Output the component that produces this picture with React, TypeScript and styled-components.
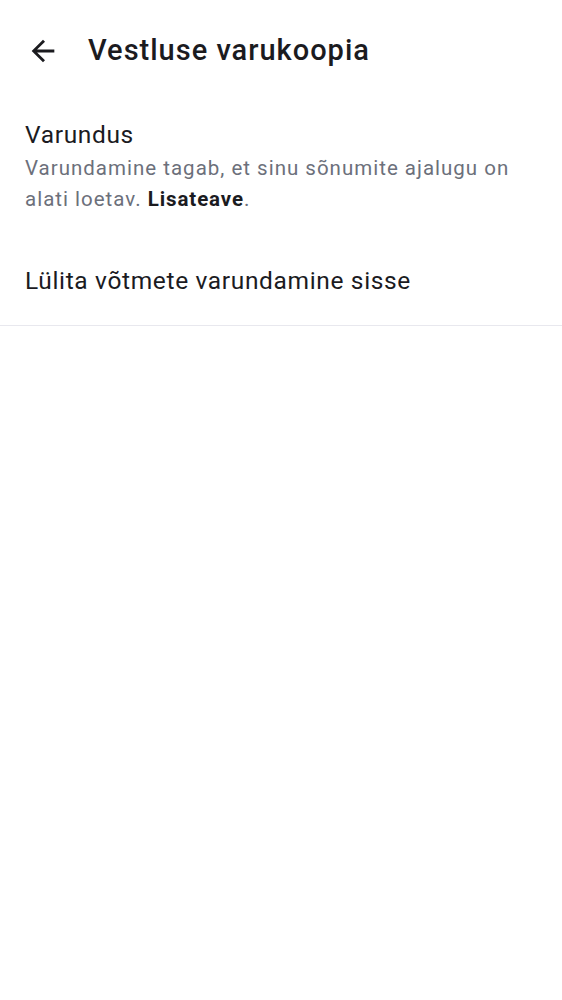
import React from "react";
import styled, { createGlobalStyle } from "styled-components";

const Global = createGlobalStyle`
  html, body { margin: 0; padding: 0; background: #ffffff; }
  body { font-family: Roboto, "Noto Sans", sans-serif; -webkit-font-smoothing: antialiased; }
`;

const Page = styled.div`
  width: 562px;
  min-height: 1000px;
  background: #ffffff;
  display: flex;
  flex-direction: column;
`;

const Toolbar = styled.header`
  height: 100px;
  display: flex;
  align-items: center;
  padding-left: 26px;
  box-sizing: border-box;
`;

const BackButton = styled.button`
  width: 34px;
  height: 34px;
  border: none;
  background: transparent;
  padding: 0;
  display: flex;
  align-items: center;
  justify-content: center;
  margin-right: 28px;
  margin-top: 2px;
  cursor: pointer;
`;

const Title = styled.h1`
  margin: 0;
  font-size: 29px;
  font-weight: 500;
  color: #1b1b1f;
  letter-spacing: 1px;
  line-height: 36px;
`;

const Item = styled.div<{ $divider?: boolean }>`
  padding: 0 25px;
  display: flex;
  flex-direction: column;
  border-bottom: ${(p) => (p.$divider ? "1px solid #e8e8ee" : "none")};
`;

const ItemTitle = styled.div`
  font-size: 24.5px;
  letter-spacing: 0.65px;
  color: #1b1b1f;
  line-height: 32px;
  white-space: nowrap;
`;

const ItemSub = styled.div`
  margin-top: 2px;
  font-size: 20.5px;
  letter-spacing: 1px;
  line-height: 31px;
  color: #6c707b;
  b { color: #1b1b1f; font-weight: 700; letter-spacing: 0.9px; }
`;

const BackupSection = styled(Item)`
  padding-top: 19px;
  padding-bottom: 30px;
`;

const ToggleSection = styled(Item)`
  padding-top: 20px;
  padding-bottom: 28px;
`;

export default function App() {
  return (
    <Page>
      <Global />
      <Toolbar>
        <BackButton aria-label="Tagasi">
          <svg width="34" height="34" viewBox="0 0 24 24">
            <path d="M20 11H7.83l5.59-5.59L12 4l-8 8 8 8 1.41-1.41L7.83 13H20v-2z" fill="#1b1b1f" />
          </svg>
        </BackButton>
        <Title>Vestluse varukoopia</Title>
      </Toolbar>
      <BackupSection>
        <ItemTitle>Varundus</ItemTitle>
        <ItemSub>
          Varundamine tagab, et sinu sõnumite ajalugu on alati loetav. <b>Lisateave</b>.
        </ItemSub>
      </BackupSection>
      <ToggleSection $divider>
        <ItemTitle>Lülita võtmete varundamine sisse</ItemTitle>
      </ToggleSection>
    </Page>
  );
}
